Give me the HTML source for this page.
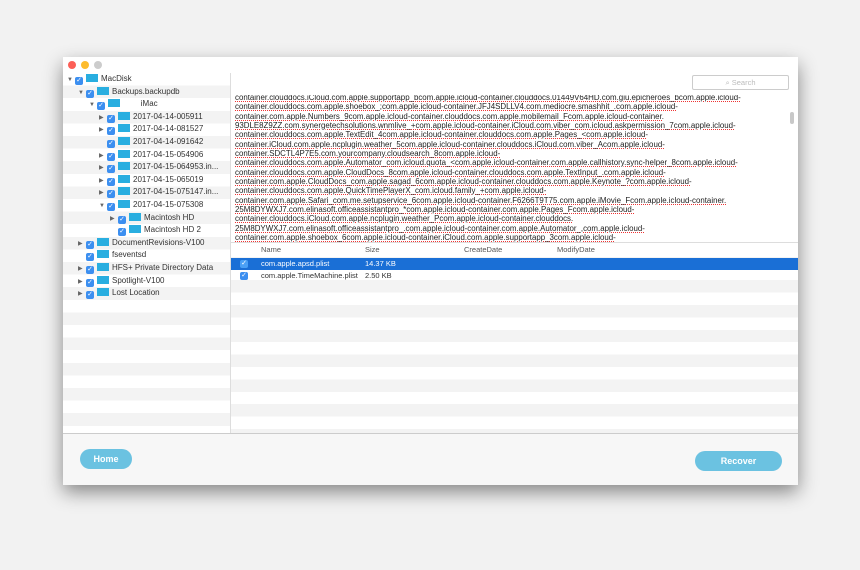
<!DOCTYPE html><html><head><style>
body{margin:0;width:860px;height:570px;background:#f2f2f2;font-family:"Liberation Sans",sans-serif;position:relative;overflow:hidden}
.win{position:absolute;left:63px;top:57px;width:735px;height:427px;background:#fff;box-shadow:0 8px 18px rgba(0,0,0,.45)}
.dot{position:absolute;top:4px;width:8px;height:8px;border-radius:50%}
.left{position:absolute;left:0;top:16px;width:167px;height:360px;border-right:1px solid #ddd;background:repeating-linear-gradient(#fff 0 12.6px,#f3f3f3 12.6px 25.2px)}
.row{position:absolute;height:12.6px;font-size:8px;color:#333;line-height:12.6px;white-space:nowrap}
.tri{display:inline-block;width:8px;font-size:6px;color:#666}
.cb{display:inline-block;width:8px;height:8px;background:#3c8ff0;border-radius:2px;vertical-align:-1px;margin-right:3px;color:#fff;font-size:7px;line-height:8px;text-align:center}
.fd{display:inline-block;width:12px;height:8px;background:#29aee0;vertical-align:-1px;margin-right:3px}
.txt{position:absolute;left:0;width:552px;font-size:7.9px;line-height:9.35px;color:#222;white-space:nowrap}
.txt div{text-decoration:underline dotted #e33;text-decoration-thickness:1px}
.tab{position:absolute;left:168px;top:185px;width:567px;height:191px;background:repeating-linear-gradient(#fff 0 12.4px,#f3f3f3 12.4px 24.8px);border-top:1px solid #ddd}
.th{position:absolute;top:0;height:14px;background:#fff;width:100%;font-size:7.5px;color:#555;line-height:14px}
.foot{position:absolute;left:0;top:376px;width:735px;height:51px;background:#f7f7f7;border-top:1px solid #ccc}
.btn{position:absolute;background:#6bc2e1;color:#fff;font-weight:bold;font-size:9px;text-align:center;border-radius:11px}
</style></head><body><div class="win">
<div class="dot" style="left:5px;background:#fc5f57"></div><div class="dot" style="left:18px;background:#fdbc2e"></div><div class="dot" style="left:31px;background:#ccc"></div>
<div class="left">
<div class="row" style="top:0;left:4px"><span class="tri">▼</span><span class="cb">✓</span><span class="fd"></span>MacDisk</div>
<div class="row" style="top:12.6px;left:15px"><span class="tri">▼</span><span class="cb">✓</span><span class="fd"></span>Backups.backupdb</div>
<div class="row" style="top:25.2px;left:26px"><span class="tri">▼</span><span class="cb">✓</span><span class="fd"></span>&nbsp;&nbsp;&nbsp;&nbsp;&nbsp;&nbsp;&nbsp;&nbsp;iMac</div>
<div class="row" style="top:37.8px;left:36px"><span class="tri">▶</span><span class="cb">✓</span><span class="fd"></span>2017-04-14-005911</div>
<div class="row" style="top:50.4px;left:36px"><span class="tri">▶</span><span class="cb">✓</span><span class="fd"></span>2017-04-14-081527</div>
<div class="row" style="top:63px;left:36px"><span class="tri"></span><span class="cb">✓</span><span class="fd"></span>2017-04-14-091642</div>
<div class="row" style="top:75.6px;left:36px"><span class="tri">▶</span><span class="cb">✓</span><span class="fd"></span>2017-04-15-054906</div>
<div class="row" style="top:88.2px;left:36px"><span class="tri">▶</span><span class="cb">✓</span><span class="fd"></span>2017-04-15-064953.in...</div>
<div class="row" style="top:100.8px;left:36px"><span class="tri">▶</span><span class="cb">✓</span><span class="fd"></span>2017-04-15-065019</div>
<div class="row" style="top:113.4px;left:36px"><span class="tri">▶</span><span class="cb">✓</span><span class="fd"></span>2017-04-15-075147.in...</div>
<div class="row" style="top:126px;left:36px"><span class="tri">▼</span><span class="cb">✓</span><span class="fd"></span>2017-04-15-075308</div>
<div class="row" style="top:138.6px;left:47px"><span class="tri">▶</span><span class="cb">✓</span><span class="fd"></span>Macintosh HD</div>
<div class="row" style="top:151.2px;left:47px"><span class="tri"></span><span class="cb">✓</span><span class="fd"></span>Macintosh HD 2</div>
<div class="row" style="top:163.8px;left:15px"><span class="tri">▶</span><span class="cb">✓</span><span class="fd"></span>DocumentRevisions-V100</div>
<div class="row" style="top:176.4px;left:15px"><span class="tri"></span><span class="cb">✓</span><span class="fd"></span>fseventsd</div>
<div class="row" style="top:189px;left:15px"><span class="tri">▶</span><span class="cb">✓</span><span class="fd"></span>HFS+ Private Directory Data</div>
<div class="row" style="top:201.6px;left:15px"><span class="tri">▶</span><span class="cb">✓</span><span class="fd"></span>Spotlight-V100</div>
<div class="row" style="top:214.2px;left:15px"><span class="tri">▶</span><span class="cb">✓</span><span class="fd"></span>Lost Location</div>
</div>
<div style="position:absolute;left:629px;top:18px;width:95px;height:13px;border:1px solid #ccc;border-radius:2px;font-size:7.5px;color:#bbb;line-height:13px;text-align:center">⌕ Search</div>
<div style="position:absolute;left:727px;top:55px;width:4px;height:12px;background:#c8c8c8;border-radius:2px"></div>
<div style="position:absolute;left:172px;top:38px;width:552px;height:147px;overflow:hidden">
<div class="txt" style="top:-2px">
<div>container.clouddocs.iCloud.com.apple.supportapp_bcom.apple.icloud-container.clouddocs.01449V64HD.com.giu.epicheroes_bcom.apple.icloud-</div>
<div>container.clouddocs.com.apple.shoebox_;com.apple.icloud-container.JFJ4SDLLV4.com.mediocre.smashhit_.com.apple.icloud-</div>
<div>container.com.apple.Numbers_9com.apple.icloud-container.clouddocs.com.apple.mobilemail_Fcom.apple.icloud-container.</div>
<div>93DLE8Z9ZZ.com.synergetechsolutions.wnmlive_+com.apple.icloud-container.iCloud.com.viber_com.icloud.askpermission_7com.apple.icloud-</div>
<div>container.clouddocs.com.apple.TextEdit_4com.apple.icloud-container.clouddocs.com.apple.Pages_&lt;com.apple.icloud-</div>
<div>container.iCloud.com.apple.ncplugin.weather_5com.apple.icloud-container.clouddocs.iCloud.com.viber_Acom.apple.icloud-</div>
<div>container.SDCTL4P7E5.com.yourcompany.cloudsearch_8com.apple.icloud-</div>
<div>container.clouddocs.com.apple.Automator_com.icloud.quota_&lt;com.apple.icloud-container.com.apple.callhistory.sync-helper_8com.apple.icloud-</div>
<div>container.clouddocs.com.apple.CloudDocs_8com.apple.icloud-container.clouddocs.com.apple.TextInput_.com.apple.icloud-</div>
<div>container.com.apple.CloudDocs_com.apple.sagad_6com.apple.icloud-container.clouddocs.com.apple.Keynote_?com.apple.icloud-</div>
<div>container.clouddocs.com.apple.QuickTimePlayerX_com.icloud.family_+com.apple.icloud-</div>
<div>container.com.apple.Safari_com.me.setupservice_6com.apple.icloud-container.F6266T9T75.com.apple.iMovie_Fcom.apple.icloud-container.</div>
<div>25M8DYWXJ7.com.elinasoft.officeassistantpro_*com.apple.icloud-container.com.apple.Pages_Fcom.apple.icloud-</div>
<div>container.clouddocs.iCloud.com.apple.ncplugin.weather_Pcom.apple.icloud-container.clouddocs.</div>
<div>25M8DYWXJ7.com.elinasoft.officeassistantpro_.com.apple.icloud-container.com.apple.Automator_,com.apple.icloud-</div>
<div>container.com.apple.shoebox_6com.apple.icloud-container.iCloud.com.apple.supportapp_3com.apple.icloud-</div>
</div></div>
<div class="tab">
<div class="th"><span style="position:absolute;left:30px">Name</span><span style="position:absolute;left:134px">Size</span><span style="position:absolute;left:233px">CreateDate</span><span style="position:absolute;left:326px">ModifyDate</span></div>
<div style="position:absolute;top:15px;height:12px;width:100%;background:#1a6fd6;color:#fff;font-size:7.5px;line-height:12px"><span class="cb" style="position:absolute;left:9px;top:2px;background:#4aa0f5">✓</span><span style="position:absolute;left:30px">com.apple.apsd.plist</span><span style="position:absolute;left:134px">14.37 KB</span></div>
<div style="position:absolute;top:27px;height:12px;width:100%;color:#333;font-size:7.5px;line-height:12px"><span class="cb" style="position:absolute;left:9px;top:2px">✓</span><span style="position:absolute;left:30px">com.apple.TimeMachine.plist</span><span style="position:absolute;left:134px">2.50 KB</span></div>
</div>
<div class="foot">
<div class="btn" style="left:17px;top:15px;width:52px;height:20px;line-height:20px">Home</div>
<div class="btn" style="left:632px;top:17px;width:87px;height:20px;line-height:20px">Recover</div>
</div>
</div></body></html>
